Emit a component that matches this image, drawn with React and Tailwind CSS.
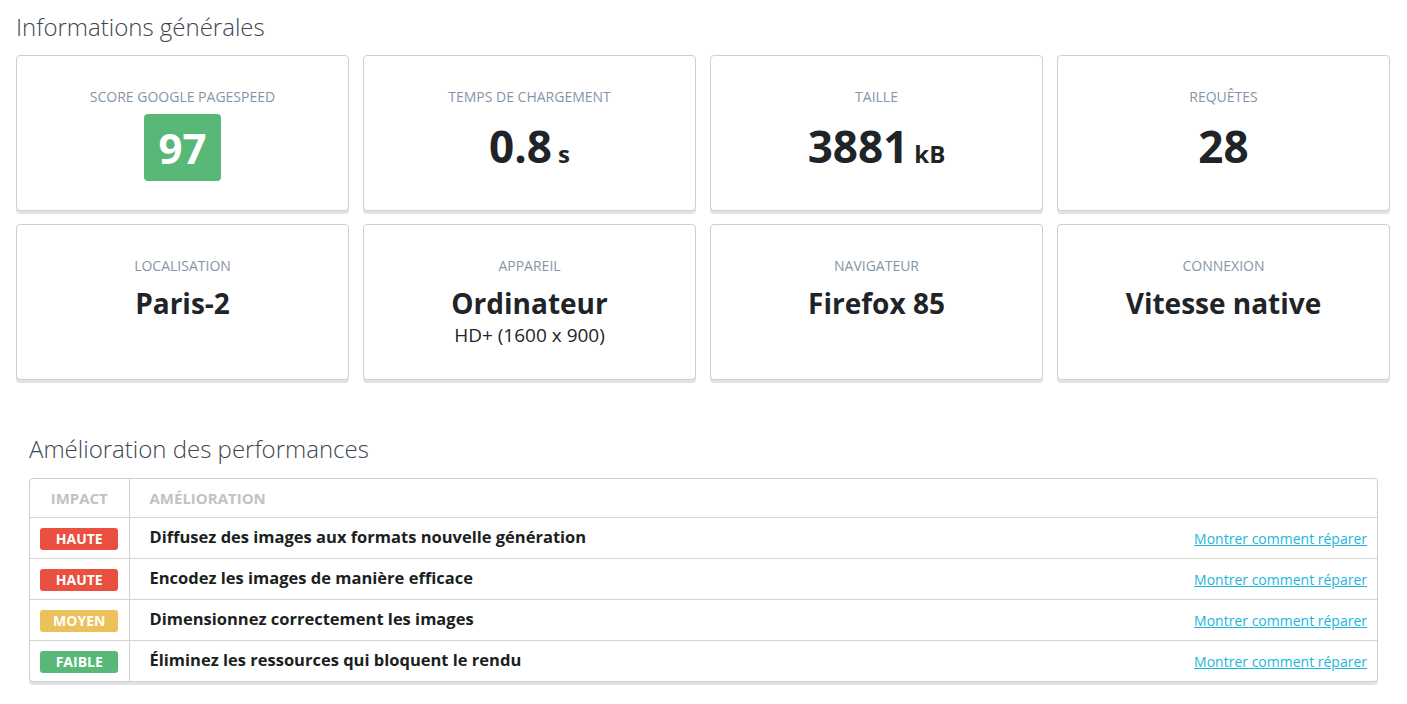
import React from 'react';

const font = { fontFamily: '"Open Sans", "Noto Sans", sans-serif' };

const topCards = [
  { label: 'Score Google PageSpeed', score: 97 },
  { label: 'Temps de chargement', value: '0.8', unit: 's' },
  { label: 'Taille', value: '3881', unit: 'kB' },
  { label: 'Requêtes', value: '28' },
];

const bottomCards = [
  { label: 'Localisation', value: 'Paris-2' },
  { label: 'Appareil', value: 'Ordinateur', sub: 'HD+ (1600 x 900)' },
  { label: 'Navigateur', value: 'Firefox 85' },
  { label: 'Connexion', value: 'Vitesse native' },
];

const improvements = [
  { impact: 'Haute', color: 'bg-[#e9503f]', text: 'Diffusez des images aux formats nouvelle génération' },
  { impact: 'Haute', color: 'bg-[#e9503f]', text: 'Encodez les images de manière efficace' },
  { impact: 'Moyen', color: 'bg-[#ecc15b]', text: 'Dimensionnez correctement les images' },
  { impact: 'Faible', color: 'bg-[#57b877]', text: 'Éliminez les ressources qui bloquent le rendu' },
];

const Card = ({ children }) => (
  <div className="h-[156px] rounded border border-[#cfcfcf] bg-white shadow-[0_3px_0_#e2e2e2] flex flex-col items-center pt-[31px]">
    {children}
  </div>
);

const Label = ({ children }) => (
  <div className="text-[14px] leading-[20px] uppercase text-[#8595a9]">{children}</div>
);

const App = () => {
  return (
    <div className="min-h-screen bg-white pl-4 pr-[17px] pt-[10px]" style={font}>
      <h1 className="text-[24px] leading-[34px] font-light text-[#3c4650] mb-[11px]">Informations générales</h1>

      <div className="grid grid-cols-4 gap-x-[14px] gap-y-[13px]">
        {topCards.map((c) => (
          <Card key={c.label}>
            <Label>{c.label}</Label>
            {c.score ? (
              <div className="mt-[7px] w-[77px] h-[67px] rounded bg-[#57b877] text-white font-bold text-[42px] leading-[67px] text-center">
                {c.score}
              </div>
            ) : (
              <div className="mt-[12px] font-bold text-[#1e2428] text-[44px] leading-[54px]">
                {c.value}
                {c.unit && <span className="text-[24px] ml-[6px]">{c.unit}</span>}
              </div>
            )}
          </Card>
        ))}
        {bottomCards.map((c) => (
          <Card key={c.label}>
            <Label>{c.label}</Label>
            <div className="mt-[8px] font-bold text-[#1e2428] text-[28px] leading-[38px]">{c.value}</div>
            {c.sub && <div className="text-[19px] leading-[26px] text-[#1e2428]">{c.sub}</div>}
          </Card>
        ))}
      </div>

      <div className="pl-[13px] pr-[12px] mt-[52px]">
        <h2 className="text-[24px] leading-[34px] font-light text-[#3c4650] mb-[12px]">Amélioration des performances</h2>
        <div className="rounded border border-[#cfcfcf] shadow-[0_3px_0_#e2e2e2] bg-white overflow-hidden">
          <table className="w-full border-collapse">
            <thead>
              <tr className="h-[38px]">
                <th className="w-[99px] border-r border-[#d4d4d4] text-[15px] font-bold uppercase text-[#c2c2c2] text-center">Impact</th>
                <th className="pl-5 text-[15px] font-bold uppercase text-[#c2c2c2] text-left" colSpan={2}>Amélioration</th>
              </tr>
            </thead>
            <tbody>
              {improvements.map((r, i) => (
                <tr key={i} className="h-[41px] border-t border-[#d4d4d4]">
                  <td className="border-r border-[#d4d4d4] text-center">
                    <span className={`inline-block w-[78px] h-[22px] rounded-[3px] ${r.color} text-white text-[14px] font-bold uppercase leading-[22px] align-middle`}>
                      {r.impact}
                    </span>
                  </td>
                  <td className="pl-5 text-[16.5px] font-bold text-[#1b1f22]">{r.text}</td>
                  <td className="pr-[10px] text-right">
                    <a href="#" className="text-[14px] text-[#1bb6d9] underline">Montrer comment réparer</a>
                  </td>
                </tr>
              ))}
            </tbody>
          </table>
        </div>
      </div>
    </div>
  );
};

export default App;
